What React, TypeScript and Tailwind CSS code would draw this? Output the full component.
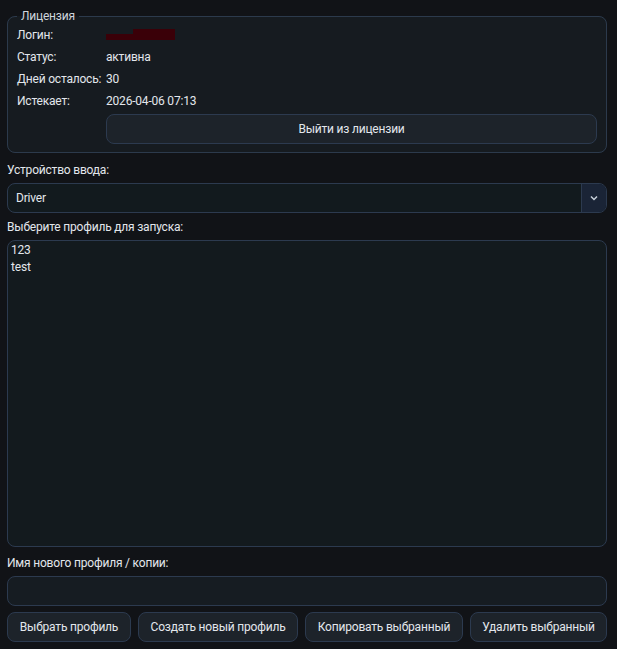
import React from "react";

const font = { fontFamily: 'Roboto, "Noto Sans", sans-serif' };

function Row({ label, children }: { label: string; children?: React.ReactNode }) {
  return (
    <div className="flex items-center h-[22px]">
      <div className="w-[89px] shrink-0">{label}</div>
      <div className="flex items-center">{children}</div>
    </div>
  );
}

export default function App() {
  return (
    <div
      className="w-[617px] h-[649px] bg-[#111317] text-[#e3e7ec] text-[12px] leading-[16px] tracking-[-0.2px] pl-[7px] pr-[10px] pt-[8px] flex flex-col"
      style={font}
    >
      <fieldset className="border border-[#2c3a4c] rounded-[8px] bg-[#161b20] pl-[9px] pr-[9px] pb-[9px] h-[145px]">
        <legend className="px-[4px] text-[#cfd5dc] leading-[16px]">Лицензия</legend>
        <Row label="Логин:">
          <div className="relative w-[69px] h-[11px] -mt-[2px]">
            <div className="absolute left-[27px] top-0 w-[42px] h-[11px] bg-[#3a0008]" />
            <div className="absolute left-0 top-[5px] w-[28px] h-[6px] bg-[#3a0008]" />
          </div>
        </Row>
        <Row label="Статус:">активна</Row>
        <Row label="Дней осталось:">30</Row>
        <Row label="Истекает:">2026-04-06 07:13</Row>
        <div className="pl-[89px] mt-[2px]">
          <button className="w-full h-[30px] rounded-[8px] border border-[#2c3a4f] bg-[#1d232a] text-[#e3e7ec]">
            Выйти из лицензии
          </button>
        </div>
      </fieldset>

      <div className="mt-[9px] h-[16px]">Устройство ввода:</div>
      <div className="mt-[5px] h-[30px] flex rounded-[8px] border border-[#2c3a4f] bg-[#121a1e] overflow-hidden">
        <div className="flex-1 flex items-center pl-[8px]">Driver</div>
        <div className="w-[25px] border-l border-[#2c3a4f] bg-[#1a2436] flex items-center justify-center">
          <svg width="8" height="6" viewBox="0 0 8 6">
            <path d="M1 1.5 L4 4.5 L7 1.5" stroke="#c8d0da" strokeWidth="1.5" fill="none" />
          </svg>
        </div>
      </div>

      <div className="mt-[6px] h-[16px]">Выберите профиль для запуска:</div>
      <div className="mt-[5px] h-[307px] rounded-[8px] border border-[#2c3a4f] bg-[#131a1e] pt-[1px] pl-[3px]">
        <div className="h-[17px] leading-[17px]">123</div>
        <div className="h-[17px] leading-[17px]">test</div>
      </div>

      <div className="mt-[8px] h-[16px]">Имя нового профиля / копии:</div>
      <div className="mt-[5px] h-[30px] rounded-[8px] border border-[#2c3a4f] bg-[#161c22]" />

      <div className="mt-[6px] flex gap-[7px]">
        {[
          ["Выбрать профиль", "w-[124px]"],
          ["Создать новый профиль", "w-[160px]"],
          ["Копировать выбранный", "w-[158px]"],
          ["Удалить выбранный", "w-[137px]"],
        ].map(([t, w]) => (
          <button
            key={t}
            className={`${w} h-[30px] rounded-[8px] border border-[#2c3a4f] bg-[#1d232a] text-[#e3e7ec] whitespace-nowrap`}
          >
            {t}
          </button>
        ))}
      </div>
    </div>
  );
}
